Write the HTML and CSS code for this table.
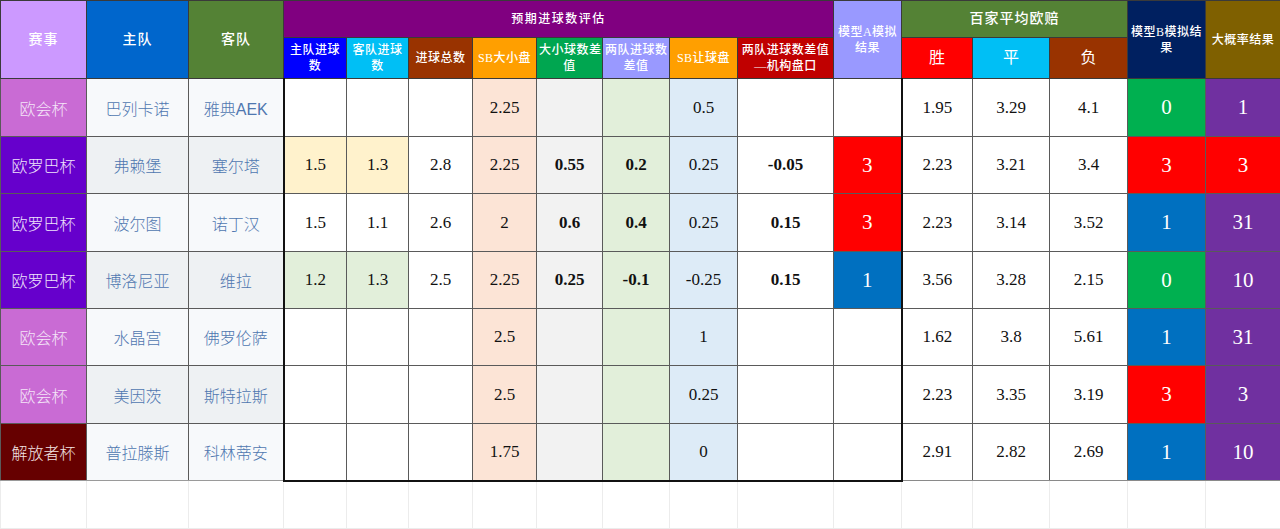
FILE: index.html
```html
<!DOCTYPE html>
<html lang="zh">
<head>
<meta charset="utf-8">
<title>预期进球数评估</title>
<link rel="stylesheet" href="styles.css">
</head>
<body>
<table class="sheet">
  <colgroup>
    <col style="width:86px"><col style="width:102px"><col style="width:95px">
    <col style="width:63px"><col style="width:62px"><col style="width:64px">
    <col style="width:64px"><col style="width:66px"><col style="width:67px">
    <col style="width:68px"><col style="width:96px"><col style="width:68px">
    <col style="width:71px"><col style="width:77px"><col style="width:78px">
    <col style="width:78px"><col style="width:75px">
  </colgroup>
  <thead>
    <tr class="h1">
      <th rowspan="2" class="h-lg c-event">赛事</th>
      <th rowspan="2" class="h-lg c-home">主队</th>
      <th rowspan="2" class="h-lg c-away">客队</th>
      <th colspan="8" class="h-md c-expect">预期进球数评估</th>
      <th rowspan="2" class="h-sm c-lav">模型A模拟<br>结果</th>
      <th colspan="3" class="h-lg c-odds">百家平均欧赔</th>
      <th rowspan="2" class="h-sm c-navy">模型B模拟结<br>果</th>
      <th rowspan="2" class="h-sm c-olive">大概率结果</th>
    </tr>
    <tr class="h2">
      <th class="h-sm c-blue">主队进球<br>数</th>
      <th class="h-sm c-cyan">客队进球<br>数</th>
      <th class="h-sm c-brown">进球总数</th>
      <th class="h-sm c-orange">SB大小盘</th>
      <th class="h-sm c-green">大小球数差<br>值</th>
      <th class="h-sm c-lav">两队进球数<br>差值</th>
      <th class="h-sm c-orange">SB让球盘</th>
      <th class="h-sm c-darkred">两队进球数差值<br>—机构盘口</th>
      <th class="h-xl c-red">胜</th>
      <th class="h-xl c-cyan">平</th>
      <th class="h-xl c-brown">负</th>
    </tr>
  </thead>
  <tbody>
    <tr class="r-a">
      <td class="ev ev-uecl">欧会杯</td>
      <td class="team t-light">巴列卡诺</td>
      <td class="team t-light">雅典AEK</td>
      <td class="num box-l"></td><td class="num"></td><td class="num"></td>
      <td class="num b-peach">2.25</td><td class="num b-gray"></td><td class="num b-green"></td>
      <td class="num b-blue">0.5</td><td class="num"></td>
      <td class="res box-r"></td>
      <td class="num">1.95</td><td class="num">3.29</td><td class="num">4.1</td>
      <td class="res r-green">0</td><td class="res r-purple">1</td>
    </tr>
    <tr class="r-b">
      <td class="ev ev-uel">欧罗巴杯</td>
      <td class="team t-gray">弗赖堡</td>
      <td class="team t-gray">塞尔塔</td>
      <td class="num b-yellow box-l">1.5</td><td class="num b-yellow">1.3</td><td class="num">2.8</td>
      <td class="num b-peach">2.25</td><td class="num b-gray bold">0.55</td><td class="num b-green bold">0.2</td>
      <td class="num b-blue">0.25</td><td class="num bold">-0.05</td>
      <td class="res r-red box-r">3</td>
      <td class="num">2.23</td><td class="num">3.21</td><td class="num">3.4</td>
      <td class="res r-red">3</td><td class="res r-red">3</td>
    </tr>
    <tr class="r-a">
      <td class="ev ev-uel">欧罗巴杯</td>
      <td class="team t-light">波尔图</td>
      <td class="team t-light">诺丁汉</td>
      <td class="num box-l">1.5</td><td class="num">1.1</td><td class="num">2.6</td>
      <td class="num b-peach">2</td><td class="num b-gray bold">0.6</td><td class="num b-green bold">0.4</td>
      <td class="num b-blue">0.25</td><td class="num bold">0.15</td>
      <td class="res r-red box-r">3</td>
      <td class="num">2.23</td><td class="num">3.14</td><td class="num">3.52</td>
      <td class="res r-blue">1</td><td class="res r-purple">31</td>
    </tr>
    <tr class="r-b">
      <td class="ev ev-uel">欧罗巴杯</td>
      <td class="team t-gray">博洛尼亚</td>
      <td class="team t-gray">维拉</td>
      <td class="num b-green box-l">1.2</td><td class="num b-green">1.3</td><td class="num">2.5</td>
      <td class="num b-peach">2.25</td><td class="num b-gray bold">0.25</td><td class="num b-green bold">-0.1</td>
      <td class="num b-blue">-0.25</td><td class="num bold">0.15</td>
      <td class="res r-blue box-r">1</td>
      <td class="num">3.56</td><td class="num">3.28</td><td class="num">2.15</td>
      <td class="res r-green">0</td><td class="res r-purple">10</td>
    </tr>
    <tr class="r-b">
      <td class="ev ev-uecl">欧会杯</td>
      <td class="team t-light">水晶宫</td>
      <td class="team t-light">佛罗伦萨</td>
      <td class="num box-l"></td><td class="num"></td><td class="num"></td>
      <td class="num b-peach">2.5</td><td class="num b-gray"></td><td class="num b-green"></td>
      <td class="num b-blue">1</td><td class="num"></td>
      <td class="res box-r"></td>
      <td class="num">1.62</td><td class="num">3.8</td><td class="num">5.61</td>
      <td class="res r-blue">1</td><td class="res r-purple">31</td>
    </tr>
    <tr class="r-a">
      <td class="ev ev-uecl">欧会杯</td>
      <td class="team t-gray">美因茨</td>
      <td class="team t-gray">斯特拉斯</td>
      <td class="num box-l"></td><td class="num"></td><td class="num"></td>
      <td class="num b-peach">2.5</td><td class="num b-gray"></td><td class="num b-green"></td>
      <td class="num b-blue">0.25</td><td class="num"></td>
      <td class="res box-r"></td>
      <td class="num">2.23</td><td class="num">3.35</td><td class="num">3.19</td>
      <td class="res r-red">3</td><td class="res r-purple">3</td>
    </tr>
    <tr class="r-b last">
      <td class="ev ev-lib">解放者杯</td>
      <td class="team t-light">普拉滕斯</td>
      <td class="team t-light">科林蒂安</td>
      <td class="num box-l"></td><td class="num"></td><td class="num"></td>
      <td class="num b-peach">1.75</td><td class="num b-gray"></td><td class="num b-green"></td>
      <td class="num b-blue">0</td><td class="num"></td>
      <td class="res box-r"></td>
      <td class="num">2.91</td><td class="num">2.82</td><td class="num">2.69</td>
      <td class="res r-blue">1</td><td class="res r-purple">10</td>
    </tr>
    <tr class="blank">
      <td></td><td></td><td></td><td></td><td></td><td></td><td></td><td></td><td></td>
      <td></td><td></td><td></td><td></td><td></td><td></td><td></td><td></td>
    </tr>
  </tbody>
</table>
</body>
</html>
```
FILE: styles.css
```css
html, body {
  margin: 0;
  padding: 0;
  background: #ffffff;
}

.sheet {
  width: 1280px;
  table-layout: fixed;
  border-collapse: collapse;
  font-family: "Liberation Serif", "Noto Sans CJK SC", serif;
}

.sheet th,
.sheet td {
  border: 1px solid #5a5a5a;
  padding: 0 2px;
  text-align: center;
  vertical-align: middle;
  overflow: hidden;
  white-space: nowrap;
}

.sheet th {
  color: #ffffff;
  font-family: "Liberation Serif", "Noto Sans CJK SC", serif;
  font-weight: 500;
  line-height: 16px;
  border-color: #3a3a3a;
}

.h1 { height: 37px; }
.h2 { height: 41px; }

.h-lg { font-size: 14px; letter-spacing: 1px; }
.h-md { font-size: 12px; letter-spacing: 1.5px; }
.h-sm { font-size: 12px; letter-spacing: 0.5px; }
.sheet .h-xl { font-size: 16px; font-weight: 400; }

/* header colours */
.c-event { background: #cc99ff; }
.c-home { background: #0066cc; }
.c-away { background: #548235; }
.c-expect { background: #800080; }
.c-lav { background: #9999ff; }
.c-odds { background: #548235; }
.c-navy { background: #002060; }
.c-olive { background: #7f6000; }
.c-blue { background: #0000ff; }
.c-cyan { background: #00bff5; }
.c-brown { background: #993300; }
.c-orange { background: #ff9f00; }
.c-green { background: #00a650; }
.c-darkred { background: #c00000; }
.c-red { background: #ff0000; }

/* body rows */
.r-a { height: 58px; }
.r-b { height: 57px; }

.ev {
  font-size: 16px;
  font-family: "Noto Sans CJK SC", sans-serif;
  font-weight: 300;
}
.ev-uecl { background: #c96bd4; color: #f4e6f8; }
.ev-uel { background: #6600cc; color: #efe4fb; }
.ev-lib { background: #660000; color: #f3e4e4; }

.team {
  font-size: 16px;
  font-family: "Liberation Sans", "Noto Sans CJK SC", sans-serif;
  color: #4f77b0;
  font-weight: 300;
  border-color: #6a6a6a;
}
.t-light { background: #f7f9fb; }
.t-gray { background: #eef1f3; }

.num {
  font-size: 17px;
  color: #111111;
  border-color: #6e6e6e;
}
.bold { font-weight: 700; }

.b-peach { background: #fce4d6; }
.b-gray { background: #f2f2f2; }
.b-green { background: #e2efda; }
.b-blue { background: #ddebf7; }
.b-yellow { background: #fff2cc; }

.res {
  font-size: 21px;
  color: #ffffff;
}
.r-green { background: #00b050; }
.r-red { background: #ff0000; }
.r-blue { background: #0070c0; }
.r-purple { background: #7030a0; }

.sheet td.box-l { border-left: 2px solid #111111; }
.sheet td.box-r { border-right: 2px solid #111111; }
.last .num,
.last .res.box-r {
  border-bottom: 2px solid #111111;
}
.last td:nth-child(n+13) { border-bottom: 1px solid #8a8a8a; }
.last .team, .last .ev { border-bottom: 1px solid #9a9a9a; }

.blank { height: 48px; }
.sheet .blank td {
  border: 1px solid #ececec;
  border-top: none;
}
```
